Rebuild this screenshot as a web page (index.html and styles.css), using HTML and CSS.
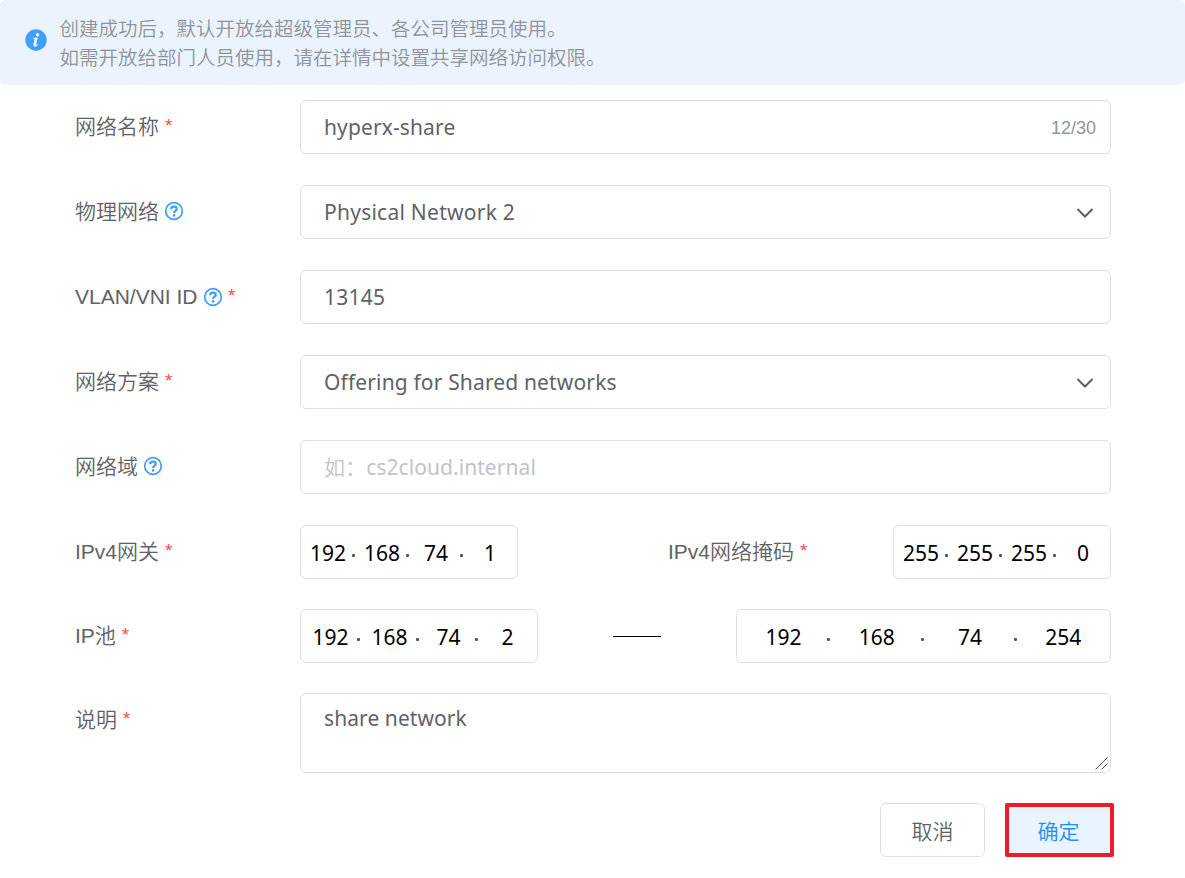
FILE: index.html
```html
<!DOCTYPE html>
<html lang="zh-CN">
<head>
<meta charset="utf-8">
<title>创建共享网络</title>
<link rel="stylesheet" href="styles.css">
</head>
<body>
<svg width="0" height="0" class="defs">
  <symbol id="help" viewBox="0 0 20 20">
    <circle cx="10" cy="10" r="8.3" fill="none" stroke="#409eff" stroke-width="1.7"/>
    <path d="M7.1 8.2C7.1 6.5 8.3 5.6 10 5.6S12.8 6.5 12.8 7.9C12.8 9.6 10.1 9.7 10.1 12" fill="none" stroke="#409eff" stroke-width="2.2"/>
    <circle cx="10.1" cy="14.4" r="1.3" fill="#409eff"/>
  </symbol>
  <symbol id="chevron" viewBox="0 0 18 12">
    <path d="M1.5 2L9 9.5L16.5 2" fill="none" stroke="#5a5e66" stroke-width="2"/>
  </symbol>
</svg>

<div class="alert">
  <svg class="info" viewBox="0 0 22 22">
    <circle cx="11" cy="11" r="10.7" fill="#409eff"/>
    <path d="M8.1 9.1L12.8 8.5L11.2 15.1Q11 16 11.6 15.8Q12.2 15.5 12.8 14.7L13.3 15.1Q11.8 17.7 9.9 17.7Q8 17.5 8.4 15.3L9.7 10.4Q9.8 9.8 8.1 9.7Z" fill="#fff"/>
    <circle cx="12.5" cy="5.7" r="1.7" fill="#fff"/>
  </svg>
  <div class="alert-text">
    <p>创建成功后，默认开放给超级管理员、各公司管理员使用。</p>
    <p>如需开放给部门人员使用，请在详情中设置共享网络访问权限。</p>
  </div>
</div>

<main class="form">
  <div class="row">
    <div class="label">网络名称<i class="req">*</i></div>
    <div class="field"><span class="w-name">hyperx-share</span><span class="count">12/30</span></div>
  </div>
  <div class="row">
    <div class="label">物理网络<svg class="help"><use href="#help"/></svg></div>
    <div class="field"><span class="w-phys">Physical Network 2</span><svg class="chevron"><use href="#chevron"/></svg></div>
  </div>
  <div class="row">
    <div class="label">VLAN/VNI ID<svg class="help help-vlan"><use href="#help"/></svg><i class="req">*</i></div>
    <div class="field"><span class="w-vlan">13145</span></div>
  </div>
  <div class="row">
    <div class="label">网络方案<i class="req">*</i></div>
    <div class="field"><span class="w-offer">Offering for Shared networks</span><svg class="chevron"><use href="#chevron"/></svg></div>
  </div>
  <div class="row">
    <div class="label">网络域<svg class="help"><use href="#help"/></svg></div>
    <div class="field placeholder"><span><span class="cjk">如：</span>cs2cloud.internal</span></div>
  </div>
  <div class="row row-gateway">
    <div class="label">IPv4网关<i class="req">*</i></div>
    <div class="ip"><b>192</b><b>168</b><b>74</b><b>1</b></div>
    <div class="label label-mask">IPv4网络掩码<i class="req">*</i></div>
    <div class="ip"><b>255</b><b>255</b><b>255</b><b>0</b></div>
  </div>
  <div class="row row-pool">
    <div class="label">IP池<i class="req">*</i></div>
    <div class="ip"><b>192</b><b>168</b><b>74</b><b>2</b></div>
    <div class="dash"></div>
    <div class="ip"><b>192</b><b>168</b><b>74</b><b>254</b></div>
  </div>
  <div class="row row-desc">
    <div class="label">说明<i class="req">*</i></div>
    <div class="field textarea"><span class="w-desc">share network</span>
      <svg class="grip" viewBox="0 0 13 13"><path d="M.5 12.5L12.5 .5M6.5 12.5L12.5 6.5" stroke="#555" stroke-width="1" fill="none"/></svg>
    </div>
  </div>
  <div class="actions">
    <button class="btn">取消</button>
    <button class="btn btn-ok">确定</button>
  </div>
</main>
</body>
</html>
```

FILE: styles.css
```css
* { box-sizing: border-box; }
body {
  margin: 0;
  background: #fff;
  color: #606266;
  font-family: "Liberation Sans", "Noto Sans CJK SC", sans-serif;
  font-size: 21px;
  font-weight: 350;
}
p { margin: 0; }
.defs { display: block; }
.alert {
  display: flex;
  height: 85px;
  padding: 15px 25px 13px;
  background: #ebf3ff;
  border-radius: 6px;
  color: #909399;
}
.info { width: 22px; height: 22px; margin: 14px 12.5px 0 0; }
.alert-text { font-size: 19.5px; line-height: 29px; white-space: nowrap; }
.form { padding: 15px 74px 0 75px; }
.row {
  display: grid;
  grid-template-columns: 225px 811px;
  height: 54px;
  margin-bottom: 31px;
}
.label {
  display: flex;
  align-items: center;
  height: 53px;
  line-height: 30px;
  white-space: nowrap;
}
.req { color: #ff4949; font-style: normal; font-size: 19px; margin: 0 0 1px 6px; }
.help { width: 20px; height: 20px; margin: 0 0 1px 4.5px; }
.help-vlan { margin: 0 0 0 5px; }
.help + .req { margin-left: 5.5px; }
.field {
  display: flex;
  align-items: center;
  justify-content: space-between;
  padding: 0 14px 0 23px;
  border: 1px solid #dcdfe6;
  border-radius: 6px;
  font-family: "Noto Sans", "Noto Sans CJK SC", sans-serif;
  font-weight: 400;
  line-height: 30px;
  white-space: nowrap;
}
.w-name { letter-spacing: .12px; }
.w-phys { letter-spacing: .25px; }
.w-vlan { letter-spacing: .25px; }
.w-offer { letter-spacing: .15px; }
.w-desc { letter-spacing: .08px; }
.placeholder { color: #c0c4cc; letter-spacing: .07px; }
.cjk { font-weight: 350; }
.count { margin-top: 2px; font-family: "Liberation Sans", sans-serif; font-size: 18px; color: #909399; }
.chevron { width: 18px; height: 12px; margin: 1px 2px 0 0; }
.row-gateway { grid-template-columns: 225px 218px 1fr 218px; margin-bottom: 30px; }
.label-mask { padding-left: 150px; }
.row-pool { grid-template-columns: 225px 238px 1fr 375px; margin-bottom: 30px; }
.ip {
  display: grid;
  grid-template-columns: repeat(4, 1fr);
  align-items: center;
  border: 1px solid #dcdfe6;
  border-radius: 6px;
  color: #000;
  font-family: "Noto Sans", sans-serif;
}
.ip b {
  display: grid;
  grid-template-columns: 1fr 3px;
  align-items: center;
  padding: 1px 0 0 3px;
  font-weight: 400;
  line-height: 30px;
  text-align: center;
}
.ip b:not(:last-child)::after {
  content: "";
  width: 3px;
  height: 3px;
  margin: 5px 0 0;
  border-radius: 1px;
  background: #555;
}
.dash { width: 48px; height: 1px; margin: 27px 0 0 75px; background: #000; }
.row-desc { height: 80px; margin-bottom: 30px; }
.textarea { position: relative; align-items: flex-start; padding-top: 9px; }
.grip { position: absolute; right: 2px; bottom: 2px; width: 13px; height: 13px; }
.actions { display: flex; gap: 20px; margin-left: 805px; }
.btn {
  flex: none;
  width: 105px;
  height: 54px;
  padding: 0;
  background: #fff;
  border: 1px solid #dcdfe6;
  border-radius: 6px;
  color: #606266;
  font: inherit;
}
.btn-ok {
  width: 109px;
  padding-right: 2px;
  background: #e8f4ff;
  border: 4px solid #ed1c24;
  border-radius: 2px;
  color: #1890ff;
}
```
